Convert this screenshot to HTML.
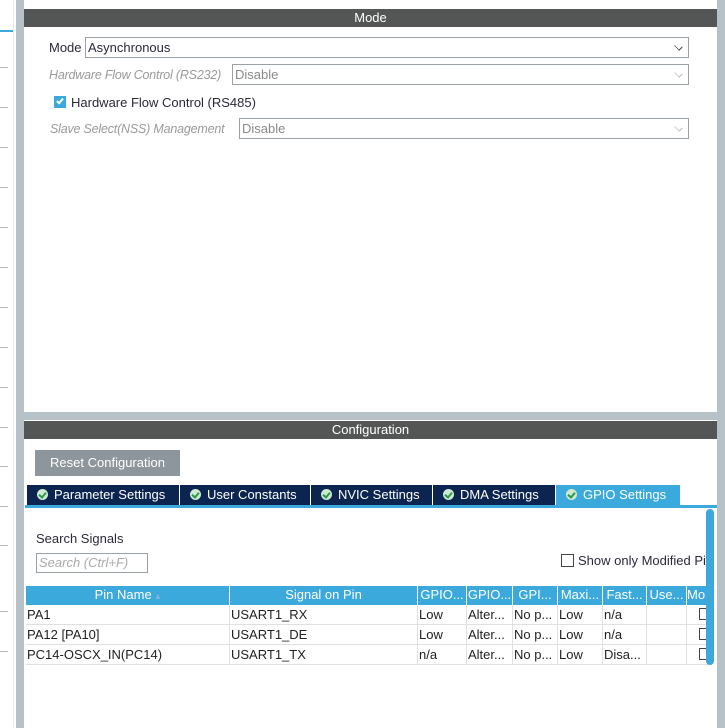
<!DOCTYPE html>
<html><head><meta charset="utf-8"><style>
*{margin:0;padding:0;box-sizing:border-box}
body{width:725px;height:728px;position:relative;overflow:hidden;background:#fff;font-family:"Liberation Sans",sans-serif;font-size:13px;color:#2a2a3a}
.a{position:absolute}
.hdr{background:#545655;color:#fff;text-align:center;font-size:13px;line-height:18px}
.sel{border:1px solid #9aa2a8;background:#fff;height:21px;line-height:19px;padding-left:2px}
.sel.dis{color:#8a8a8a}
.chev{position:absolute;right:6px;top:5px;width:7px;height:7px;border-right:1px solid #444;border-bottom:1px solid #444;transform:rotate(45deg) scale(1,0.7)}
.dis .chev{border-color:#bbb}
.lbl{color:#9a9a9a;font-style:italic;font-size:12.5px;letter-spacing:-0.2px;white-space:nowrap}
.tab{position:absolute;top:485px;height:20px;background:#0b2550;color:#fff;line-height:19px;font-size:13px;padding-left:10px}
.tab i{display:inline-block;width:11px;height:11px;border-radius:50%;background:#cde9d1;vertical-align:-1px;margin-right:6px;position:relative}
.tab i:after{content:"";position:absolute;left:3px;top:2px;width:3px;height:5px;border-right:2px solid #2a9a4a;border-bottom:2px solid #2a9a4a;transform:rotate(40deg)}
.th{position:absolute;top:586px;height:19px;background:#3ba9db;color:#fff;line-height:18px;text-align:center;overflow:hidden;white-space:nowrap}
.td{position:absolute;height:20px;line-height:19px;border-right:1px solid #e0e0e0;border-bottom:1px solid #e0e0e0;padding-left:1px;white-space:nowrap;overflow:hidden;color:#222}
.tick{position:absolute;left:0;width:8px;height:1px;background:#bbb}
</style></head><body>
<div class="a" style="left:0;top:30px;width:14px;height:2px;background:#3ba9db"></div>
<div class="tick" style="top:67px"></div><div class="tick" style="top:107px"></div><div class="tick" style="top:147px"></div><div class="tick" style="top:187px"></div><div class="tick" style="top:227px"></div><div class="tick" style="top:267px"></div><div class="tick" style="top:307px"></div><div class="tick" style="top:347px"></div><div class="tick" style="top:387px"></div><div class="tick" style="top:427px"></div><div class="tick" style="top:466px"></div><div class="tick" style="top:506px"></div><div class="tick" style="top:545px"></div><div class="tick" style="top:611px"></div><div class="tick" style="top:651px"></div>
<div class="a" style="left:13px;top:0;width:1px;height:728px;background:#e6e6e6"></div>
<div class="a" style="left:16px;top:0;width:8px;height:728px;background:#b7c2c8"></div>
<div class="a" style="left:717px;top:0;width:8px;height:728px;background:#b7c2c8"></div>
<div class="a" style="left:24px;top:412px;width:693px;height:8px;background:#b7c2c8"></div>
<div class="a hdr" style="left:24px;top:9px;width:693px">Mode</div>
<div class="a" style="left:49px;top:40px">Mode</div>
<div class="a sel" style="left:85px;top:37px;width:604px">Asynchronous<span class="chev"></span></div>
<div class="a lbl" style="left:49px;top:68px">Hardware Flow Control (RS232)</div>
<div class="a sel dis" style="left:232px;top:64px;width:457px">Disable<span class="chev"></span></div>
<div class="a" style="left:54px;top:96px;width:12px;height:12px;background:#3ba9db"></div>
<div class="a" style="left:58px;top:97px;width:4px;height:7px;border-right:2px solid #fff;border-bottom:2px solid #fff;transform:rotate(40deg)"></div>
<div class="a" style="left:71px;top:95px">Hardware Flow Control (RS485)</div>
<div class="a lbl" style="left:50px;top:122px">Slave Select(NSS) Management</div>
<div class="a sel dis" style="left:239px;top:118px;width:450px">Disable<span class="chev"></span></div>
<div class="a hdr" style="left:24px;top:421px;width:693px">Configuration</div>
<div class="a" style="left:35px;top:450px;width:145px;height:26px;background:#8d969c;color:#fff;line-height:26px;text-align:center">Reset Configuration</div>
<div class="tab" style="left:27px;width:152px"><i></i>Parameter Settings</div>
<div class="tab" style="left:180px;width:130px"><i></i>User Constants</div>
<div class="tab" style="left:311px;width:121px"><i></i>NVIC Settings</div>
<div class="tab" style="left:433px;width:122px"><i></i>DMA Settings</div>
<div class="tab" style="left:556px;width:124px;background:#3ba9db"><i></i>GPIO Settings</div>
<div class="a" style="left:25px;top:505px;width:692px;height:3px;background:#3ba9db"></div>
<div class="a" style="left:36px;top:531px">Search Signals</div>
<div class="a" style="left:36px;top:553px;width:112px;height:20px;border:1px solid #9aa2a8;color:#aaa;font-style:italic;line-height:18px;padding-left:2px">Search (Ctrl+F)</div>
<div class="a" style="left:561px;top:554px;width:13px;height:13px;border:1px solid #444"></div>
<div class="a" style="left:578px;top:553px;white-space:nowrap">Show only Modified Pi</div>
<div class="th" style="left:26px;width:203px">Pin Name <span style="color:#7fb8d6;font-size:10px">&#x25B4;</span></div>
<div class="th" style="left:230px;width:187px">Signal on Pin</div>
<div class="th" style="left:418px;width:48px">GPIO...</div>
<div class="th" style="left:467px;width:45px">GPIO...</div>
<div class="th" style="left:513px;width:44px">GPI...</div>
<div class="th" style="left:558px;width:44px">Maxi...</div>
<div class="th" style="left:603px;width:43px">Fast...</div>
<div class="th" style="left:647px;width:39px">Use...</div>
<div class="th" style="left:687px;width:20px;text-align:left">Mo</div>
<div class="td" style="left:26px;top:605px;width:204px">PA1</div>
<div class="td" style="left:230px;top:605px;width:188px">USART1_RX</div>
<div class="td" style="left:418px;top:605px;width:49px">Low</div>
<div class="td" style="left:467px;top:605px;width:46px">Alter...</div>
<div class="td" style="left:513px;top:605px;width:45px">No p...</div>
<div class="td" style="left:558px;top:605px;width:45px">Low</div>
<div class="td" style="left:603px;top:605px;width:44px">n/a</div>
<div class="td" style="left:647px;top:605px;width:40px"></div>
<div class="td" style="left:687px;top:605px;width:22px;border-right:none"><span style="position:absolute;left:12px;top:3px;width:12px;height:12px;border:1px solid #444"></span></div>
<div class="td" style="left:26px;top:625px;width:204px">PA12 [PA10]</div>
<div class="td" style="left:230px;top:625px;width:188px">USART1_DE</div>
<div class="td" style="left:418px;top:625px;width:49px">Low</div>
<div class="td" style="left:467px;top:625px;width:46px">Alter...</div>
<div class="td" style="left:513px;top:625px;width:45px">No p...</div>
<div class="td" style="left:558px;top:625px;width:45px">Low</div>
<div class="td" style="left:603px;top:625px;width:44px">n/a</div>
<div class="td" style="left:647px;top:625px;width:40px"></div>
<div class="td" style="left:687px;top:625px;width:22px;border-right:none"><span style="position:absolute;left:12px;top:3px;width:12px;height:12px;border:1px solid #444"></span></div>
<div class="td" style="left:26px;top:645px;width:204px">PC14-OSCX_IN(PC14)</div>
<div class="td" style="left:230px;top:645px;width:188px">USART1_TX</div>
<div class="td" style="left:418px;top:645px;width:49px">n/a</div>
<div class="td" style="left:467px;top:645px;width:46px">Alter...</div>
<div class="td" style="left:513px;top:645px;width:45px">No p...</div>
<div class="td" style="left:558px;top:645px;width:45px">Low</div>
<div class="td" style="left:603px;top:645px;width:44px">Disa...</div>
<div class="td" style="left:647px;top:645px;width:40px"></div>
<div class="td" style="left:687px;top:645px;width:22px;border-right:none"><span style="position:absolute;left:12px;top:3px;width:12px;height:12px;border:1px solid #444"></span></div>
<div class="a" style="left:706px;top:509px;width:8px;height:156px;border-radius:4px;background:#3ba9db"></div>
</body></html>
